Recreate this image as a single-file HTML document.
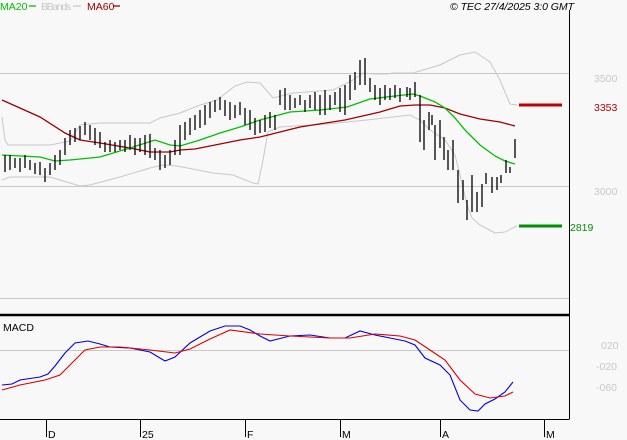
<!DOCTYPE html>
<html><head><meta charset="utf-8"><style>
html,body{margin:0;padding:0;background:#f8f8f8;width:627px;height:440px;overflow:hidden}
svg{display:block}
text{font-family:"Liberation Sans",sans-serif;font-size:10.5px}
</style></head><body>
<svg width="627" height="440" viewBox="0 0 627 440" xmlns="http://www.w3.org/2000/svg">
<rect width="627" height="440" fill="#f8f8f8"/>
<text x="0" y="10" fill="#00c000">MA20</text><line x1="29" y1="6" x2="36" y2="6" stroke="#00c000" stroke-width="1.3"/>
<text x="41" y="10" fill="#c8c8c8" textLength="30">BBands</text><line x1="73" y1="6" x2="81" y2="6" stroke="#c8c8c8" stroke-width="1.3"/>
<text x="87" y="10" fill="#a00000">MA60</text><line x1="113" y1="6" x2="120" y2="6" stroke="#a00000" stroke-width="1.3"/>
<text x="450" y="10" fill="#000" font-style="italic" textLength="124">© TEC 27/4/2025 3:0 GMT</text>
<line x1="569.5" y1="10" x2="569.5" y2="419.5" stroke="#000"/>
<line x1="0" y1="315" x2="569" y2="315" stroke="#000" stroke-width="2.5"/>
<line x1="0" y1="419.5" x2="569" y2="419.5" stroke="#000"/>
<g stroke="#c8c8c8" stroke-width="1">
<line x1="0" y1="73.5" x2="569" y2="73.5"/>
<line x1="0" y1="186.5" x2="569" y2="186.5"/>
<line x1="0" y1="298.5" x2="569" y2="298.5"/>
<line x1="0" y1="350.5" x2="569" y2="350.5"/>
</g>
<g fill="none" stroke="#c8c8c8" stroke-width="1">
<polyline points="2,117 5,140 8,145 50,145 70,141 80,125 100,123 150,123 160,118 180,113 200,105 217,100 235,86 247,82 260,83 273,98 293,93 333,90 353,80 363,73 373,74 387,74 393,73 413,73 440,65 460,55 475,52 490,62 500,80 510,104 517,105"/>
<polyline points="2,180 10,177 50,177 60,180 80,186 90,185 120,177 150,168 163,165 177,166 213,173 233,175 253,183 258,184 263,160 268,132 280,127 327,124 367,120 393,117 410,115 420,120 430,130 445,140 455,155 460,175 467,205 472,218 480,225 495,233 505,232 517,226"/>
</g>
<polyline fill="none" stroke="#a00000" stroke-width="1.3" points="2,100 40,117 65,133 80,140 100,143 130,148 150,152 170,152 180,150 195,149 215,145 240,140 260,137 300,127 345,120 380,112 400,106 415,105 430,105 445,108 460,114 480,119 500,122 515,126"/>
<polyline fill="none" stroke="#00c000" stroke-width="1.3" points="2,155 40,157 55,161 70,160 100,157 130,148 155,140 170,145 180,146 200,140 220,133 240,127 260,120 290,112 320,110 347,107 370,99 395,96 413,94 420,96 435,102 445,108 455,118 465,130 480,145 495,156 505,161 515,164"/>
<path fill="none" stroke="#000" stroke-width="1.3" d="M5,155V172M10,155V170M15,158V168M20,158V172M25,155V168M30,160V170M35,163V174M40,162V175M45,168V182M50,163V175M55,155V170M60,150V165M65,138V155M70,130V145M75,128V142M80,126V140M85,122V135M90,125V140M95,128V145M100,132V148M105,142V152M110,140V152M115,142V152M120,140V150M125,140V152M130,135V150M135,138V155M140,138V152M145,135V155M150,134V158M155,148V160M160,150V170M165,155V168M170,150V165M175,140V155M180,125V155M185,122V140M190,118V135M195,115V130M200,110V128M205,105V125M210,102V118M215,100V112M220,97V110M225,100V116M230,102V120M235,105V118M240,102V115M245,108V125M250,110V130M255,118V135M260,120V133M265,115V132M270,112V128M275,115V130M280,90V105M285,88V110M290,95V110M295,98V108M300,95V105M305,100V112M310,95V108M315,92V110M320,95V115M325,90V115M330,95V110M335,92V105M340,88V112M345,85V115M350,75V100M355,72V90M360,60V85M365,58V85M370,78V92M375,85V100M380,88V105M385,85V100M390,88V100M395,85V98M400,88V102M407,87V97M410,88V100M415,82V97M420,95V142M424,120V150M429,112V130M432,115V125M435,125V160M440,120V148M444,137V160M448,150V170M453,140V170M458,170V203M463,180V200M467,200V220M472,175V212M477,192V212M482,184V207M486,173V184M492,177V193M497,177V190M501,175V183M506,160V173M510,167V173M515,139V158"/>
<line x1="519" y1="105" x2="562" y2="105" stroke="#c00000" stroke-width="3"/>
<line x1="519" y1="226" x2="562" y2="226" stroke="#009000" stroke-width="3"/>
<text x="594" y="82" fill="#c8c8c8">3500</text>
<text x="594" y="111" fill="#c00000">3353</text>
<text x="594" y="195" fill="#c8c8c8">3000</text>
<text x="570" y="231" fill="#009000">2819</text>
<text x="3" y="331" fill="#000" font-size="10">MACD</text>
<polyline fill="none" stroke="#0000e0" stroke-width="1.1" points="2,385 12,384 20,380 40,377 48,374 55,366 65,353 75,343 88,341 100,344 110,347 130,348 150,352 165,361 175,357 190,343 210,331 225,326 240,326 250,330 260,336 270,341 278,339 290,336 310,335 330,338 345,338 360,331 375,335 390,338 405,341 415,345 425,358 440,365 450,375 460,400 470,410 478,411 485,404 495,399 505,392 513,382"/>
<polyline fill="none" stroke="#e00000" stroke-width="1.1" points="2,390 20,385 45,380 60,375 70,365 85,350 100,347 120,347 150,350 175,353 190,349 210,339 230,330 260,334 290,336 330,338 350,338 375,334 400,336 415,340 430,350 445,360 460,380 475,394 490,398 505,396 513,392"/>
<text x="601" y="349" fill="#c8c8c8">020</text>
<text x="596" y="370" fill="#c8c8c8">-020</text>
<text x="596" y="391" fill="#c8c8c8">-060</text>
<g stroke="#000" stroke-width="1">
<line x1="46.5" y1="419" x2="46.5" y2="437"/>
<line x1="140.5" y1="419" x2="140.5" y2="437"/>
<line x1="245.5" y1="419" x2="245.5" y2="437"/>
<line x1="340.5" y1="419" x2="340.5" y2="437"/>
<line x1="440.5" y1="419" x2="440.5" y2="437"/>
<line x1="544.5" y1="419" x2="544.5" y2="437"/>
</g>
<g fill="#000" font-size="12">
<text x="48" y="438">D</text><text x="142" y="438">25</text><text x="247" y="438">F</text>
<text x="342" y="438">M</text><text x="442" y="438">A</text><text x="546" y="438">M</text>
</g>
</svg>
</body></html>
